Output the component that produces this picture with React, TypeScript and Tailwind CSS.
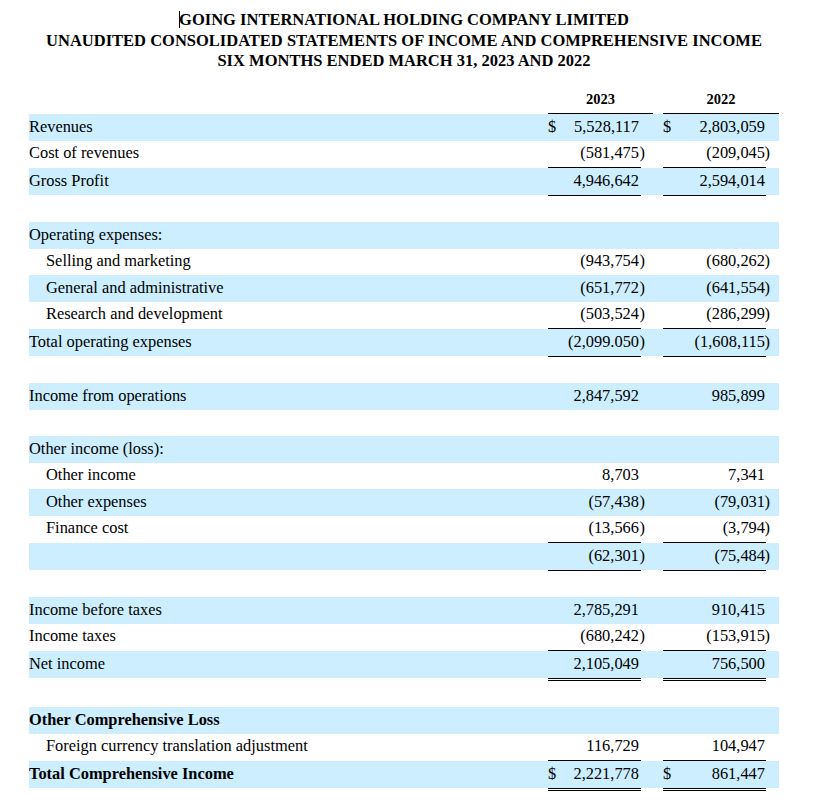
import React from 'react';

type Line = 'single' | 'double';

type RowData = {
  label?: string;
  indent?: boolean;
  bold?: boolean;
  a?: string;
  b?: string;
  dollar?: boolean;
  line?: Line;
};

const rows: RowData[] = [
  { label: 'Revenues', a: '5,528,117', b: '2,803,059', dollar: true },
  { label: 'Cost of revenues', a: '(581,475)', b: '(209,045)', line: 'single' },
  { label: 'Gross Profit', a: '4,946,642', b: '2,594,014', line: 'single' },
  {},
  { label: 'Operating expenses:' },
  { label: 'Selling and marketing', indent: true, a: '(943,754)', b: '(680,262)' },
  { label: 'General and administrative', indent: true, a: '(651,772)', b: '(641,554)' },
  { label: 'Research and development', indent: true, a: '(503,524)', b: '(286,299)', line: 'single' },
  { label: 'Total operating expenses', a: '(2,099.050)', b: '(1,608,115)', line: 'single' },
  {},
  { label: 'Income from operations', a: '2,847,592', b: '985,899' },
  {},
  { label: 'Other income (loss):' },
  { label: 'Other income', indent: true, a: '8,703', b: '7,341' },
  { label: 'Other expenses', indent: true, a: '(57,438)', b: '(79,031)' },
  { label: 'Finance cost', indent: true, a: '(13,566)', b: '(3,794)', line: 'single' },
  { a: '(62,301)', b: '(75,484)', line: 'single' },
  {},
  { label: 'Income before taxes', a: '2,785,291', b: '910,415' },
  { label: 'Income taxes', a: '(680,242)', b: '(153,915)', line: 'single' },
  { label: 'Net income', a: '2,105,049', b: '756,500', line: 'double' },
  {},
  { label: 'Other Comprehensive Loss', bold: true },
  { label: 'Foreign currency translation adjustment', indent: true, a: '116,729', b: '104,947', line: 'single' },
  { label: 'Total Comprehensive Income', bold: true, a: '2,221,778', b: '861,447', dollar: true, line: 'double' },
];

const cols = 'grid grid-cols-[519px_20px_73px_12px_10px_20px_83px_13px]';

function split(v?: string) {
  if (!v) return ['', ''];
  if (v.endsWith(')')) return [v.slice(0, -1), ')'];
  return [v, ''];
}

function Row({ r, blue }: { r: RowData; blue: boolean }) {
  const [aNum, aParen] = split(r.a);
  const [bNum, bParen] = split(r.b);
  const lineCls =
    r.line === 'double' ? 'border-b-[3px] border-double border-black' : 'border-b border-black';

  return (
    <div>
      <div className={`${cols} h-[26.5px] items-center ${blue ? 'bg-[#cceeff]' : ''}`}>
        <div className={`whitespace-nowrap ${r.indent ? 'pl-[17px]' : ''} ${r.bold ? 'font-bold' : ''}`}>
          {r.label}
        </div>
        <div>{r.dollar ? '$' : ''}</div>
        <div className="text-right pr-[2px]">{aNum}</div>
        <div className="-ml-[1.5px]">{aParen}</div>
        <div />
        <div>{r.dollar ? '$' : ''}</div>
        <div className="text-right pr-px">{bNum}</div>
        <div className="-ml-[1.5px]">{bParen}</div>
      </div>
      {r.line && (
        <div className={cols}>
          <div />
          <div className={`col-span-2 ${lineCls}`} />
          <div />
          <div />
          <div className={`col-span-2 ${lineCls}`} />
          <div />
        </div>
      )}
    </div>
  );
}

export default function App() {
  return (
    <div className="bg-white min-h-screen text-black font-['Liberation_Serif','Times_New_Roman',serif]">
      <div className="ml-[29px] w-[750px]">
        <div className="pt-[10px] text-center font-bold text-[16.5px] leading-[20.5px]">
          <div>
            <span className="inline-block w-px h-[17px] bg-black -mr-px align-[-3px]" />
            GOING INTERNATIONAL HOLDING COMPANY LIMITED
          </div>
          <div>UNAUDITED CONSOLIDATED STATEMENTS OF INCOME AND COMPREHENSIVE INCOME</div>
          <div>SIX MONTHS ENDED MARCH 31, 2023 AND 2022</div>
        </div>

        <div className="mt-[15px] text-[16.4px]">
          <div className={`${cols} h-[26.5px] items-center`}>
            <div />
            <div className="col-span-3 text-center font-bold text-[14.5px]">2023</div>
            <div />
            <div className="col-span-3 text-center font-bold text-[14.5px]">2022</div>
          </div>
          <div className={cols}>
            <div />
            <div className="col-span-3 border-b border-black" />
            <div />
            <div className="col-span-3 border-b border-black" />
          </div>

          {rows.map((r, i) => (
            <Row key={i} r={r} blue={i % 2 === 0} />
          ))}
        </div>
      </div>
    </div>
  );
}
